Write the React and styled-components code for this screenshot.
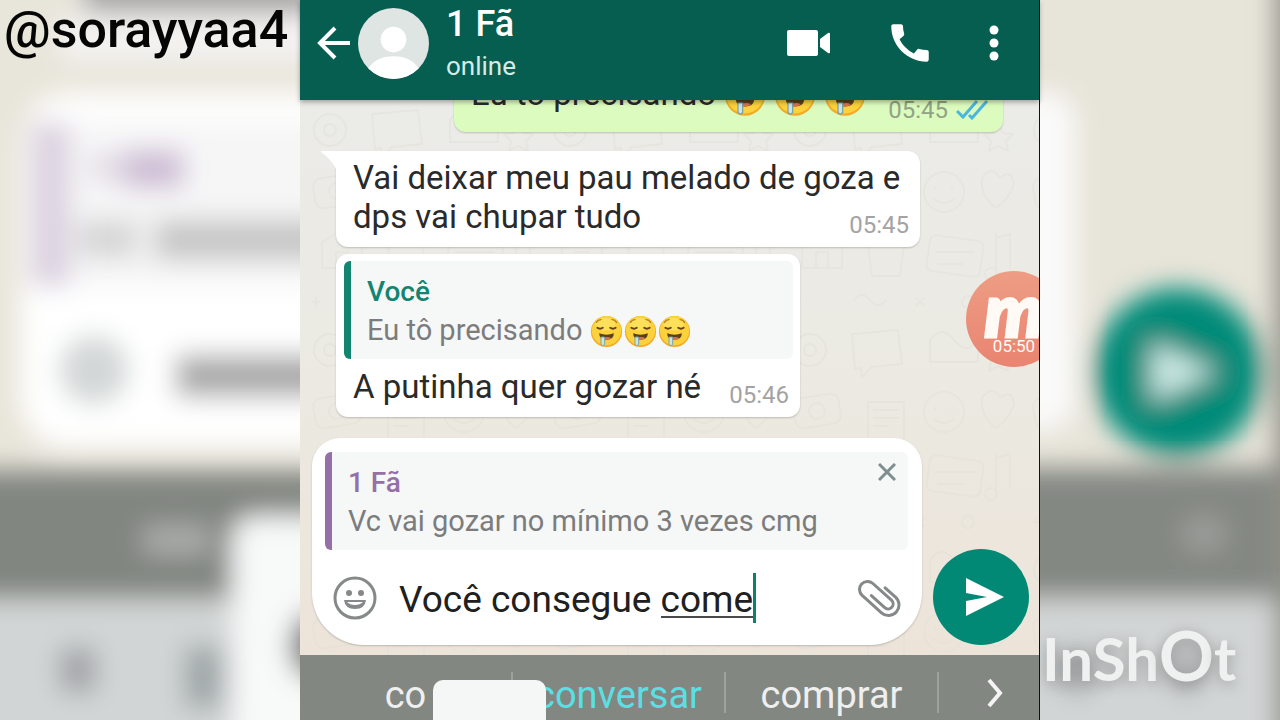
import React, { useState } from 'react';
import styled, { createGlobalStyle } from 'styled-components';

const GlobalStyle = createGlobalStyle`
  * {
    box-sizing: border-box;
  }
  body {
    margin: 0;
    background: #e8e5da;
    font-family: Roboto, "Noto Sans", sans-serif;
  }
  p, h1 {
    margin: 0;
  }
  button {
    display: flex;
    align-items: center;
    justify-content: center;
    padding: 0;
    border: 0;
    background: none;
    color: inherit;
    font: inherit;
    cursor: pointer;
  }
`;

const Stage = styled.div`
  display: grid;
  grid-template-columns: 300fr 740fr 240fr;
  height: 100vh;
  overflow: hidden;
`;

const Side = styled.aside`
  position: relative;
  display: flex;
  flex-direction: column;
  justify-content: space-between;
  min-width: 0;
  overflow: hidden;
`;

const Backdrop = styled.svg`
  position: absolute;
  inset: 0;
  width: 100%;
  height: 100%;
`;

const Handle = styled.p`
  position: relative;
  padding-left: 4px;
  color: #050505;
  font-size: 52px;
  font-weight: 500;
  line-height: 60px;
`;

const Watermark = styled.p`
  position: relative;
  margin-top: auto;
  padding: 0 0 22px 2px;
  color: #eff0f0;
  font-family: Lato, sans-serif;
  font-size: 60px;
  font-weight: 700;
  line-height: 80px;
  white-space: nowrap;
  text-shadow: 0 4px 14px rgba(80, 80, 80, 0.4);
`;

const BigLetter = styled.span`
  font-size: 68px;
`;

const Phone = styled.main`
  display: flex;
  flex-direction: column;
  min-width: 0;
  height: 100vh;
  border-right: 1px solid #0c1412;
`;

const Header = styled.header`
  position: relative;
  z-index: 2;
  display: flex;
  align-items: center;
  flex: none;
  height: 100px;
  padding: 0 40px 14px 16px;
  background: #055e4f;
  color: #fff;
  box-shadow: 0 2px 5px rgba(0, 0, 0, 0.35);
`;

const Avatar = styled.svg`
  width: 71px;
  height: 71px;
  margin: 0 17px 0 7px;
  border-radius: 50%;
`;

const Contact = styled.div`
  flex: 1;
  min-width: 0;
`;

const ContactName = styled.h1`
  font-size: 36px;
  font-weight: 500;
  line-height: 40px;
`;

const Status = styled.p`
  margin-top: 6px;
  color: #d5ebe6;
  font-size: 26px;
  line-height: 32px;
`;

const Actions = styled.div`
  display: flex;
  align-items: center;
  gap: 54px;
`;

const Chat = styled.section`
  position: relative;
  display: flex;
  flex: 1;
  flex-direction: column;
  justify-content: flex-end;
  min-height: 0;
  overflow: hidden;
  background: linear-gradient(#ebebe8, #ebeae3 45%, #ede4d9);
`;

const Messages = styled.div`
  position: relative;
  display: flex;
  flex-direction: column;
  align-items: flex-start;
  gap: 7px;
  padding: 0 36px 21px;
`;

const Bubble = styled.article`
  position: relative;
  width: ${({ $width }) => $width};
  padding: 7px 7px 11px 8px;
  border-radius: ${({ $tail }) => ($tail ? '0 12px 12px 12px' : '12px')};
  background: ${({ $sent }) => ($sent ? '#dcfcbf' : '#fff')};
  box-shadow: 0 1px 2px rgba(0, 0, 0, 0.2);
  ${({ $sent }) => $sent && 'align-self: flex-end; margin-bottom: 12px;'}
`;

const Tail = styled.svg`
  position: absolute;
  top: 0;
  right: 100%;
  width: 16px;
  height: 18px;
`;

const Body = styled.div`
  display: grid;
  margin: ${({ $quoted }) => ($quoted ? '8px' : '0')} 4px 0 9px;
`;

const MessageText = styled.p`
  grid-area: 1 / 1;
  color: #2a2a2a;
  font-size: 33px;
  line-height: 39px;
`;

const Time = styled.div`
  display: flex;
  align-items: center;
  gap: 8px;
  grid-area: 1 / 1;
  align-self: end;
  justify-self: end;
  color: ${({ $sent }) => ($sent ? '#91a384' : '#a3a3a3')};
  font-size: 24px;
  line-height: 22px;
`;

const Quote = styled.blockquote`
  position: relative;
  margin: 0;
  padding: 12px 16px 10px;
  border-left: 7px solid ${({ $color }) => $color};
  border-radius: 6px;
  background: #f6f7f7;
`;

const QuoteName = styled.p`
  color: ${({ $color }) => $color};
  font-size: 28px;
  font-weight: 500;
  line-height: 38px;
`;

const QuoteText = styled.p`
  color: #7c7c7c;
  font-size: 29px;
  line-height: 38px;
`;

const Emoji = styled.svg`
  width: ${({ $size }) => $size}px;
  height: ${({ $size }) => $size}px;
  margin: ${({ $gap }) => `0 ${$gap}px ${$gap / 2}px 0`};
  vertical-align: ${({ $drop }) => $drop}px;
`;

const Recorder = styled.button`
  && {
    position: absolute;
    z-index: 1;
    top: 171px;
    right: -23px;
    display: block;
    width: 96px;
    height: 96px;
    border-radius: 50%;
    background: linear-gradient(#ee9d84, #e98471);
    color: #fffaf5;
  }
`;

const RecorderMark = styled.span`
  display: block;
  font-family: Lato, sans-serif;
  font-size: 74px;
  font-style: italic;
  font-weight: 900;
  line-height: 54px;
  -webkit-text-stroke: 3px #fffaf5;
`;

const RecorderTime = styled.span`
  display: block;
  font-size: 17px;
  line-height: 20px;
`;

const Footer = styled.form`
  position: relative;
  display: flex;
  align-items: flex-end;
  gap: 11px;
  padding: 0 10px 10px 12px;
`;

const Composer = styled.div`
  flex: 1;
  min-width: 0;
  padding: 14px 14px 0 13px;
  border-radius: 28px 28px 52px 52px;
  background: #fff;
  box-shadow: 0 1px 2px rgba(0, 0, 0, 0.2);
`;

const CloseButton = styled.button`
  && {
    position: absolute;
    top: 5px;
    right: 6px;
    width: 30px;
    height: 30px;
    color: #7f8f90;
  }
`;

const ComposerRow = styled.div`
  display: flex;
  align-items: center;
  gap: 22px;
  height: 95px;
  padding: 0 6px 0 8px;
  color: #858989;
`;

const Field = styled.label`
  position: relative;
  flex: 1;
  min-width: 0;
  font-size: 37px;
  line-height: 50px;
`;

const TextBox = styled.input`
  display: block;
  width: 100%;
  height: 50px;
  padding: 4px 0 0;
  border: 0;
  outline: 0;
  background: none;
  color: #202020;
  font: inherit;
`;

const Marks = styled.span`
  position: absolute;
  inset: 0;
  display: flex;
  align-items: center;
  color: transparent;
  white-space: pre;
  pointer-events: none;
`;

const Composing = styled.span`
  height: 40px;
  border-bottom: 2px solid #4a4a4a;
  line-height: 40px;
`;

const Caret = styled.span`
  width: 3px;
  height: 50px;
  background: #0a8270;
`;

const SendButton = styled.button`
  && {
    flex: none;
    width: 96px;
    height: 96px;
    border-radius: 50%;
    background: #028976;
    color: #fff;
  }
`;

const Suggestions = styled.nav`
  position: relative;
  display: grid;
  grid-template-columns: 213fr 213fr 213fr 100fr;
  align-items: center;
  flex: none;
  height: 65px;
  padding-top: 10px;
  background: #838782;
`;

const Suggestion = styled.button`
  && {
    height: 41px;
    padding-top: 4px;
    border-right: 2px solid #9ea19d;
    color: ${({ $active }) => ($active ? '#5bdfe2' : '#eeefee')};
    font-size: 38px;
    line-height: 44px;
  }
`;

const MoreButton = styled.button`
  && {
    color: #f4f4f4;
    padding-left: 12px;
  }
`;

const KeyPopup = styled.div`
  position: absolute;
  top: 25px;
  left: 18%;
  width: 113px;
  height: 40px;
  border-radius: 10px 10px 0 0;
  background: #f5f6f6;
`;

const Wallpaper = () => (
  <Backdrop aria-hidden="true">
    <defs>
      <pattern id="doodles" width="240" height="220" patternUnits="userSpaceOnUse">
        <g fill="none" stroke="#dedcd3" strokeWidth="2" strokeLinejoin="round" strokeLinecap="round">
          <circle cx="30" cy="30" r="16" />
          <circle cx="30" cy="30" r="6" />
          <path d="M72 14l46-4 4 34-30 3-10 10-1-9-6 1z" />
          <path d="M150 20q12-16 24 0t24 0v22h-48z" />
          <path d="M218 24l5 9 10 1-7 7 2 10-10-5-9 5 2-10-7-7 10-1z" />
          <rect x="14" y="76" width="46" height="30" rx="8" transform="rotate(-9 37 91)" />
          <circle cx="37" cy="91" r="8" />
          <path d="M88 82h36v40H88zM94 90h24M94 98h24M94 106h14" />
          <circle cx="164" cy="92" r="20" />
          <path d="M155 88v1M172 88v1M154 99q10 8 20 0" />
          <path d="M202 78q10-14 18 0 12-10 14 6-4 14-18 24-16-12-14-30z" />
          <path d="M22 142l20-12 20 12v26H22zM36 168v-16h12v16" />
          <path d="M88 146q18-20 36 0l-4 30H92z" />
          <rect x="148" y="138" width="54" height="36" rx="6" transform="rotate(8 175 156)" />
          <path d="M156 152h38M158 164h24M216 134v40M216 138l14-4v34" />
          <circle cx="211" cy="174" r="6" />
          <path d="M12 202h8M16 198v8M74 200q8-10 16 0t16 0M136 198l8 8M144 198l-8 8" />
          <circle cx="188" cy="202" r="6" />
        </g>
      </pattern>
    </defs>
    <rect width="100%" height="100%" fill="url(#doodles)" opacity="0.35" />
  </Backdrop>
);

const LeftBackdrop = () => (
  <Backdrop viewBox="0 0 300 720" preserveAspectRatio="none" aria-hidden="true">
    <defs>
      <filter id="soften" x="-50%" y="-50%" width="200%" height="200%">
        <feGaussianBlur stdDeviation="13" />
      </filter>
    </defs>
    <rect width="300" height="720" fill="#e8e5da" />
    <g filter="url(#soften)">
      <rect x="85" y="-60" width="300" height="73" fill="#a6a6a6" />
      <rect x="60" y="16" width="300" height="45" fill="#f4f3f2" />
      <rect x="20" y="93" width="400" height="355" rx="50" fill="#fff" />
      <rect x="50" y="122" width="350" height="164" fill="#f6f6f7" />
      <rect x="30" y="122" width="40" height="165" fill="#dcd2e0" />
      <rect x="90" y="153" width="40" height="28" fill="#e3dce5" />
      <rect x="124" y="150" width="60" height="38" fill="#cdbcd4" />
      <rect x="78" y="220" width="60" height="38" fill="#d6d6d6" />
      <rect x="155" y="220" width="230" height="40" fill="#c6c6c6" />
      <circle cx="94" cy="370" r="35" fill="#d3d7d7" />
      <rect x="176" y="355" width="220" height="42" fill="#a9a9a9" />
      <rect x="-60" y="470" width="460" height="129" fill="#828681" />
      <rect x="144" y="526" width="66" height="28" fill="#acaeac" />
      <rect x="-60" y="600" width="460" height="200" fill="#d1d5d5" />
      <rect x="232" y="516" width="160" height="280" rx="22" fill="#f8f9f9" />
      <rect x="60" y="648" width="36" height="44" fill="#a0a3a5" />
      <rect x="184" y="646" width="40" height="62" fill="#a0a7a8" />
      <ellipse cx="316" cy="646" rx="26" ry="34" fill="#6d6d6d" />
    </g>
  </Backdrop>
);

const RightBackdrop = () => (
  <Backdrop viewBox="0 0 240 720" preserveAspectRatio="none" aria-hidden="true">
    <defs>
      <filter id="haze" x="-50%" y="-50%" width="200%" height="200%">
        <feGaussianBlur stdDeviation="13" />
      </filter>
    </defs>
    <rect width="240" height="720" fill="#e7e4d9" />
    <g filter="url(#haze)">
      <rect x="-80" y="92" width="116" height="338" rx="30" fill="#fafafa" />
      <rect x="-60" y="468" width="400" height="130" fill="#848883" />
      <ellipse cx="164" cy="534" rx="22" ry="18" fill="#9c9e9a" />
      <rect x="-60" y="599" width="400" height="200" fill="#d2d5d5" />
      <ellipse cx="37" cy="670" rx="18" ry="24" fill="#a3a6a6" />
      <ellipse cx="146" cy="668" rx="18" ry="26" fill="#a9acac" />
      <rect x="236" y="-60" width="60" height="840" fill="#8f8e86" />
      <circle cx="138" cy="372" r="84" fill="#008a78" />
      <path d="M112 342l66 30-66 30z" fill="#cdeae6" />
    </g>
  </Backdrop>
);

const Drool = ({ size, gap, drop }) => (
  <Emoji viewBox="0 0 36 36" $size={size} $gap={gap} $drop={drop} role="img" aria-label="🤤">
    <circle cx="18" cy="18" r="17" fill="#f2ab28" />
    <circle cx="18" cy="17" r="16" fill="#fbd13c" />
    <ellipse cx="17" cy="10" rx="11" ry="7" fill="#fde05a" />
    <path d="M7 8q2-3 5-3M24 5q3 0 5 3" fill="none" stroke="#b57a1d" strokeWidth="1.5" strokeLinecap="round" />
    <path d="M8 14q3 2 6 0M22 14q3 2 6 0" fill="none" stroke="#654018" strokeWidth="2" strokeLinecap="round" />
    <path d="M10 20q8 3 16 0 0 7-8 7t-8-7z" fill="#59401d" />
    <path d="M15 25q4-2 8 0-2 2-5 2t-3-2z" fill="#d87352" />
    <path d="M12 24h4v8q-2 3-4 0z" fill="#cce5e5" stroke="#779da3" strokeWidth="1" />
  </Emoji>
);

const Drools = (props) => (
  <>
    <Drool {...props} />
    <Drool {...props} />
    <Drool {...props} />
  </>
);

const BackIcon = () => (
  <svg width="35" height="36" viewBox="0 0 35 36" fill="none" stroke="currentColor" strokeWidth="4">
    <path d="M34 18H4M19 3L4 18l15 15" />
  </svg>
);

const VideoIcon = () => (
  <svg width="44" height="28" viewBox="0 0 44 28" fill="currentColor">
    <rect x="0" y="1" width="31" height="26" rx="2" />
    <path d="M33 10l8-6q2-1 2 1v18q0 2-2 1l-8-6z" />
  </svg>
);

const CallIcon = () => (
  <svg width="50" height="50" viewBox="0 0 24 24" fill="currentColor">
    <path d="M20.01 15.38c-1.23 0-2.42-.2-3.53-.56a.98.98 0 0 0-1.01.24l-1.57 1.97c-2.83-1.35-5.48-3.9-6.89-6.83l1.95-1.66c.27-.28.35-.67.24-1.02-.37-1.11-.56-2.3-.56-3.53 0-.54-.45-.99-.99-.99H4.19C3.65 3 3 3.24 3 3.99 3 13.28 10.73 21 20.01 21c.71 0 .99-.63.99-1.18v-3.45c0-.54-.45-.99-.99-.99z" />
  </svg>
);

const DotsIcon = () => (
  <svg width="10" height="36" viewBox="0 0 10 36" fill="currentColor">
    <circle cx="5" cy="5" r="4.5" />
    <circle cx="5" cy="18" r="4.5" />
    <circle cx="5" cy="31" r="4.5" />
  </svg>
);

const TicksIcon = () => (
  <svg width="36" height="20" viewBox="0 0 36 20" fill="none" stroke="#4cb5dc" strokeWidth="3">
    <path d="M1 11l6 6L21 1M13 15l3 3L31 1" />
  </svg>
);

const SmileIcon = () => (
  <svg width="44" height="44" viewBox="0 0 44 44" fill="currentColor">
    <circle cx="22" cy="22" r="20" fill="none" stroke="currentColor" strokeWidth="3" />
    <circle cx="16" cy="17" r="3" />
    <circle cx="28" cy="17" r="3" />
    <path d="M11 24h22q-1 9-11 9T11 24z" />
    <path d="M14 26h16q-3 3-8 3t-8-3z" fill="#fff" />
  </svg>
);

const ClipIcon = () => (
  <svg width="44" height="44" viewBox="-22 -22 44 44" fill="none" stroke="currentColor" strokeWidth="3" strokeLinecap="round">
    <path transform="rotate(42)" d="M-3-11H11A10.500 10.500 0 0 1 11 10H-15A8 8 0 0 1-15-6H10A5 5 0 0 1 10 4H-8" />
  </svg>
);

const CloseIcon = () => (
  <svg width="18" height="18" viewBox="0 0 18 18" fill="none" stroke="currentColor" strokeWidth="3">
    <path d="M1 1l16 16M17 1L1 17" />
  </svg>
);

const SendIcon = () => (
  <svg width="46" height="38" viewBox="-8 0 46 38" fill="currentColor">
    <path d="M0 0l38 19L0 38V23l21-4-21-4z" />
  </svg>
);

const ChevronIcon = () => (
  <svg width="18" height="30" viewBox="0 0 18 30" fill="none" stroke="currentColor" strokeWidth="4">
    <path d="M3 2l11 13L3 28" />
  </svg>
);

const GREEN = '#128570';
const PURPLE = '#9470a6';

const App = () => {
  const [draft, setDraft] = useState('Você consegue come');
  const cut = draft.lastIndexOf(' ') + 1;

  return (
    <>
      <GlobalStyle />
      <Stage>
        <Side>
          <LeftBackdrop />
          <Handle>@sorayyaa4</Handle>
        </Side>

        <Phone>
          <Header>
            <button type="button" aria-label="Voltar"><BackIcon /></button>
            <Avatar viewBox="0 0 72 72" aria-hidden="true">
              <rect width="72" height="72" fill="#dfe5e3" />
              <circle cx="36" cy="32" r="13" fill="#fff" />
              <path d="M10 62q8-13 26-13t26 13v12H10z" fill="#fff" />
            </Avatar>
            <Contact>
              <ContactName>1 Fã</ContactName>
              <Status>online</Status>
            </Contact>
            <Actions>
              <button type="button" aria-label="Chamada de vídeo"><VideoIcon /></button>
              <button type="button" aria-label="Ligar"><CallIcon /></button>
              <button type="button" aria-label="Mais opções"><DotsIcon /></button>
            </Actions>
          </Header>

          <Chat>
            <Wallpaper />
            <Messages>
              <Bubble $sent $width="549px">
                <Body>
                  <MessageText>
                    Eu tô precisando <Drools size={42} gap={8} drop={-16} />
                  </MessageText>
                  <Time $sent>05:45 <TicksIcon /></Time>
                </Body>
              </Bubble>
              <Bubble $tail $width="584px">
                <Tail viewBox="0 0 16 18" aria-hidden="true">
                  <path d="M1 0h15v18Q12 9 1 1z" fill="#fff" />
                </Tail>
                <Body>
                  <MessageText>Vai deixar meu pau melado de goza e dps vai chupar tudo</MessageText>
                  <Time>05:45</Time>
                </Body>
              </Bubble>
              <Bubble $width="464px">
                <Quote $color={GREEN}>
                  <QuoteName $color={GREEN}>Você</QuoteName>
                  <QuoteText>Eu tô precisando <Drools size={33} gap={1} drop={-8} /></QuoteText>
                </Quote>
                <Body $quoted>
                  <MessageText>A putinha quer gozar né</MessageText>
                  <Time>05:46</Time>
                </Body>
              </Bubble>
            </Messages>

            <Footer onSubmit={(e) => e.preventDefault()}>
              <Composer>
                <Quote $color={PURPLE}>
                  <QuoteName $color={PURPLE}>1 Fã</QuoteName>
                  <QuoteText>Vc vai gozar no mínimo 3 vezes cmg</QuoteText>
                  <CloseButton type="button" aria-label="Fechar"><CloseIcon /></CloseButton>
                </Quote>
                <ComposerRow>
                  <button type="button" aria-label="Emoji"><SmileIcon /></button>
                  <Field>
                    <TextBox
                      aria-label="Mensagem"
                      value={draft}
                      onChange={(e) => setDraft(e.target.value)}
                    />
                    <Marks aria-hidden="true">
                      <span>{draft.slice(0, cut)}</span>
                      <Composing>{draft.slice(cut)}</Composing>
                      <Caret />
                    </Marks>
                  </Field>
                  <button type="button" aria-label="Anexar"><ClipIcon /></button>
                </ComposerRow>
              </Composer>
              <SendButton type="submit" aria-label="Enviar"><SendIcon /></SendButton>
            </Footer>

            <Recorder type="button">
              <RecorderMark>m</RecorderMark>
              <RecorderTime>05:50</RecorderTime>
            </Recorder>
          </Chat>

          <Suggestions>
            <Suggestion type="button">co</Suggestion>
            <Suggestion type="button" $active>conversar</Suggestion>
            <Suggestion type="button">comprar</Suggestion>
            <MoreButton type="button" aria-label="Mais sugestões"><ChevronIcon /></MoreButton>
            <KeyPopup />
          </Suggestions>
        </Phone>

        <Side>
          <RightBackdrop />
          <Watermark>InSh<BigLetter>O</BigLetter>t</Watermark>
        </Side>
      </Stage>
    </>
  );
};

export default App;
